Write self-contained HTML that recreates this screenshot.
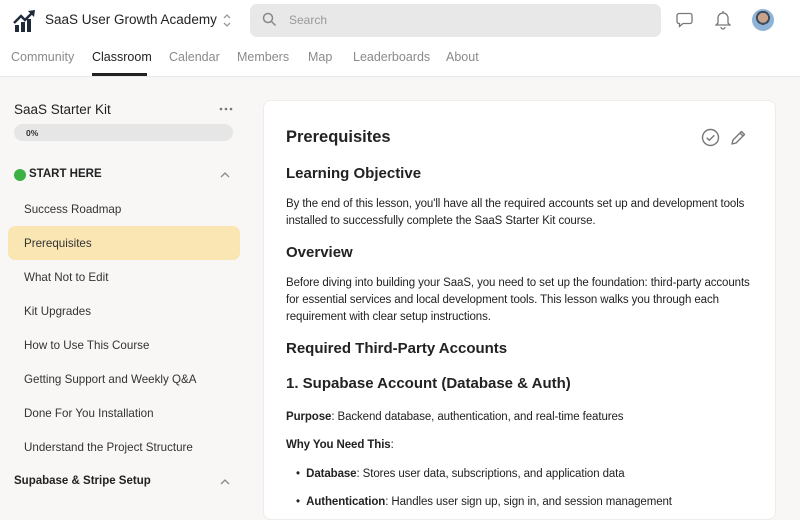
<!DOCTYPE html>
<html><head><meta charset="utf-8"><style>
*{margin:0;padding:0;box-sizing:border-box}
body{width:800px;height:500px;overflow:hidden;background:#f8f7f5;font-family:"Liberation Sans",sans-serif;color:#202124;position:relative}
.hdr{position:absolute;left:0;top:0;width:800px;height:77px;background:#fff;border-bottom:1px solid #e8e8e8}
.abs{position:absolute}
.tab{position:absolute;top:50px;font-size:12.5px;color:#8a8a8a}
.side{font-size:11.6px;color:#333;position:absolute;left:24px}
.card{position:absolute;left:263px;top:100px;width:513px;height:420px;background:#fff;border:1px solid #ececec;border-radius:8px}
.c{position:absolute;left:286px;font-size:11.5px;color:#222;line-height:17px;width:470px;letter-spacing:-0.1px}
h2{position:absolute;left:286px;font-size:15px;font-weight:bold;color:#222}
.chev{position:absolute;left:220px}
</style></head><body>
<div class="hdr">
<svg class="abs" style="left:13px;top:9px" width="24" height="24" viewBox="0 0 24 24"><rect x="2" y="16" width="4" height="7" fill="#1f2a3a"/><rect x="8" y="13" width="4" height="10" fill="#1f2a3a"/><rect x="14" y="10" width="4" height="13" fill="#1f2a3a"/><path d="M1 14 L8 7 L12 11 L20 3" stroke="#1f2a3a" stroke-width="2.4" fill="none"/><path d="M15 2 L22 1 L21 8Z" fill="#1f2a3a"/></svg>
<div class="abs" style="left:45px;top:12px;font-size:13.5px;color:#222">SaaS User Growth Academy</div>
<svg class="abs" style="left:222px;top:13px" width="10" height="15" viewBox="0 0 10 15"><path d="M2 5l3-3 3 3M2 10l3 3 3-3" stroke="#999" stroke-width="1.3" fill="none"/></svg>
<div class="abs" style="left:250px;top:4px;width:411px;height:33px;background:#e8e8e8;border-radius:7px"></div>
<svg class="abs" style="left:262px;top:12px" width="15" height="15" viewBox="0 0 15 15"><circle cx="6" cy="6" r="4.5" stroke="#888" stroke-width="1.5" fill="none"/><path d="M9.5 9.5L13.5 13.5" stroke="#888" stroke-width="1.5"/></svg>
<div class="abs" style="left:289px;top:13px;font-size:12px;color:#999">Search</div>
<svg class="abs" style="left:676px;top:12px" width="17" height="16" viewBox="0 0 17 16"><path d="M3 1.5h11a2 2 0 0 1 2 2v6a2 2 0 0 1-2 2H7l-3.5 3v-3H3a2 2 0 0 1-2-2v-6a2 2 0 0 1 2-2z" stroke="#777" stroke-width="1.3" fill="none"/></svg>
<svg class="abs" style="left:715px;top:10px" width="16" height="20" viewBox="0 0 16 20"><path d="M8 3a5 5 0 0 1 5 5v5l2 2H1l2-2V8a5 5 0 0 1 5-5zM6 17a2 2 0 0 0 4 0M8 1v2" stroke="#777" stroke-width="1.3" fill="none"/></svg>
<div class="abs" style="left:752px;top:9px;width:22px;height:22px;border-radius:50%;background:radial-gradient(circle at 50% 40%,#c9a48a 0 5px,#3d4c5e 5px 7px,#8fb3d6 7px)"></div>
<div class="tab" style="left:11px">Community</div>
<div class="tab" style="left:92px;color:#222">Classroom</div>
<div class="abs" style="left:92px;top:73px;width:55px;height:3px;background:#222"></div>
<div class="tab" style="left:169px">Calendar</div>
<div class="tab" style="left:237px">Members</div>
<div class="tab" style="left:308px">Map</div>
<div class="tab" style="left:353px">Leaderboards</div>
<div class="tab" style="left:446px">About</div>
</div>
<div class="abs" style="left:14px;top:102px;font-size:13.5px;color:#222">SaaS Starter Kit</div>
<svg class="abs" style="left:219px;top:107px" width="14" height="4" viewBox="0 0 14 4"><circle cx="2" cy="2" r="1.3" fill="#777"/><circle cx="7" cy="2" r="1.3" fill="#777"/><circle cx="12" cy="2" r="1.3" fill="#777"/></svg>
<div class="abs" style="left:14px;top:124px;width:219px;height:17px;background:#e6e6e6;border-radius:9px"></div>
<div class="abs" style="left:26px;top:128px;font-size:8.5px;font-weight:bold;color:#333">0%</div>
<div class="abs" style="left:14px;top:169px;width:12px;height:12px;border-radius:50%;background:#3cb043"></div>
<div class="abs" style="left:29px;top:168px;font-size:11.5px;font-weight:bold;color:#222">START HERE</div>
<svg class="chev" style="top:172px" width="10" height="6" viewBox="0 0 10 6"><path d="M1 5l4-4 4 4" stroke="#888" stroke-width="1.3" fill="none"/></svg>
<div class="side" style="top:203px">Success Roadmap</div>
<div class="abs" style="left:8px;top:226px;width:232px;height:34px;background:#f9e6b3;border-radius:7px"></div>
<div class="side" style="top:237px">Prerequisites</div>
<div class="side" style="top:271px">What Not to Edit</div>
<div class="side" style="top:305px">Kit Upgrades</div>
<div class="side" style="top:339px">How to Use This Course</div>
<div class="side" style="top:373px">Getting Support and Weekly Q&amp;A</div>
<div class="side" style="top:407px">Done For You Installation</div>
<div class="side" style="top:441px">Understand the Project Structure</div>
<div class="abs" style="left:14px;top:475px;font-size:11.5px;font-weight:bold;color:#222">Supabase &amp; Stripe Setup</div>
<svg class="chev" style="top:479px" width="10" height="6" viewBox="0 0 10 6"><path d="M1 5l4-4 4 4" stroke="#888" stroke-width="1.3" fill="none"/></svg>
<div class="card"></div>
<div class="abs" style="left:286px;top:128px;font-size:16.5px;font-weight:bold;color:#222">Prerequisites</div>
<svg class="abs" style="left:701px;top:128px" width="19" height="19" viewBox="0 0 19 19"><circle cx="9.5" cy="9.5" r="8" stroke="#777" stroke-width="1.4" fill="none"/><path d="M5.8 9.8l2.5 2.5 5-5" stroke="#777" stroke-width="1.4" fill="none"/></svg>
<svg class="abs" style="left:730px;top:129px" width="17" height="17" viewBox="0 0 17 17"><path d="M2 15l1-4 8.5-8.5 3 3L6 14z M10 4l3 3" stroke="#777" stroke-width="1.4" fill="none" stroke-linejoin="round"/></svg>
<h2 style="top:165px">Learning Objective</h2>
<div class="c" style="top:196px;width:465px">By the end of this lesson, you'll have all the required accounts set up and development tools installed to successfully complete the SaaS Starter Kit course.</div>
<h2 style="top:244px">Overview</h2>
<div class="c" style="top:275px;width:470px">Before diving into building your SaaS, you need to set up the foundation: third-party accounts for essential services and local development tools. This lesson walks you through each requirement with clear setup instructions.</div>
<h2 style="top:340px">Required Third-Party Accounts</h2>
<h2 style="top:375px">1. Supabase Account (Database &amp; Auth)</h2>
<div class="c" style="top:409px"><b>Purpose</b>: Backend database, authentication, and real-time features</div>
<div class="c" style="top:437px"><b>Why You Need This</b>:</div>
<div class="c" style="top:466px;left:296px">•&nbsp;&nbsp;<b>Database</b>: Stores user data, subscriptions, and application data</div>
<div class="c" style="top:494px;left:296px">•&nbsp;&nbsp;<b>Authentication</b>: Handles user sign up, sign in, and session management</div>
</body></html>
